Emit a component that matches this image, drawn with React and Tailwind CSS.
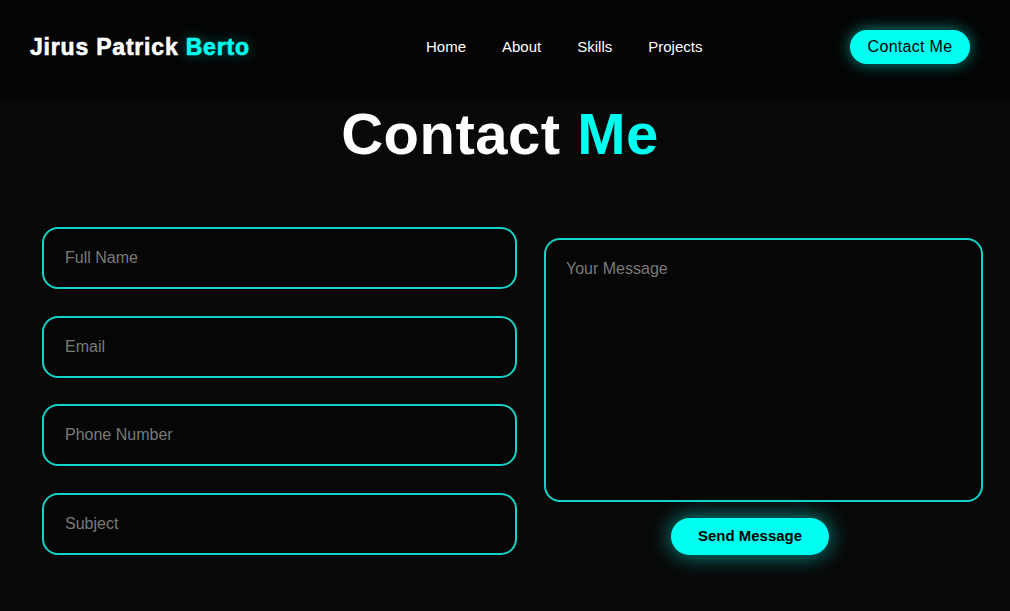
export default function App() {
  const fields = ["Full Name", "Email", "Phone Number", "Subject"];

  return (
    <div className="min-h-screen w-full bg-[#080808] font-['Liberation_Sans',Arial,sans-serif]">
      <header className="h-[98px] bg-[#040404] flex items-center pl-[30px] pr-[40px] pb-[4px]">
        <h1 className="w-[218px] whitespace-nowrap text-[23px] font-bold tracking-[0.8px] text-white leading-none [-webkit-text-stroke:0.6px_white]">
          Jirus Patrick{" "}
          <span className="text-[#00fff0] [-webkit-text-stroke:0.6px_#00fff0] [text-shadow:0_0_14px_rgba(0,255,240,0.45)]">
            Berto
          </span>
        </h1>
        <nav className="ml-[178px] flex items-center gap-[36px] text-[15px] text-white">
          <a href="#">Home</a>
          <a href="#">About</a>
          <a href="#">Skills</a>
          <a href="#">Projects</a>
        </nav>
        <button className="ml-auto w-[120px] h-[34px] rounded-full bg-[#00fff0] text-black text-[16px] tracking-[0.3px] shadow-[0_0_16px_rgba(0,255,240,0.55)]">
          Contact Me
        </button>
      </header>

      <h2 className="mt-[7px] pr-[10px] text-center text-[58px] leading-none font-bold tracking-[0.5px] text-white">
        Contact <span className="text-[#00fff0]">Me</span>
      </h2>

      <form className="mt-[64px] flex pl-[42px] pr-[27px] gap-[27px]">
        <div className="w-[475px] flex flex-col gap-[26.7px]">
          {fields.map((f) => (
            <input
              key={f}
              type="text"
              placeholder={f}
              className="h-[62px] w-full rounded-[16px] border-2 border-[#14d4c9] bg-[#060606] px-[21px] text-[16px] text-white placeholder:text-[#7a7a7a] outline-none"
            />
          ))}
        </div>
        <div className="flex-1 flex flex-col mt-[11px]">
          <textarea
            placeholder="Your Message"
            className="h-[264px] w-full resize-none rounded-[16px] border-2 border-[#14d4c9] bg-[#060606] px-[20px] pt-[17px] text-[16px] text-white placeholder:text-[#7a7a7a] outline-none"
          />
          <button
            type="button"
            className="mt-[16px] ml-[127px] w-[158px] h-[37px] rounded-full bg-[#00fff0] text-black text-[15px] font-bold shadow-[0_0_22px_rgba(0,255,240,0.6)]"
          >
            Send Message
          </button>
        </div>
      </form>
    </div>
  );
}
